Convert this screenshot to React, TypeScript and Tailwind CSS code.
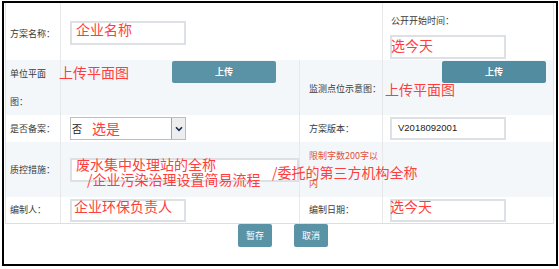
import React from "react";

const lbl = "text-[9px] leading-[28px] text-[#3a3a3a]";
const inputBox = "border-2 border-[#dde1e5] bg-white";
const red = "absolute text-[14px] leading-[14px] text-[#ff3d3d] whitespace-nowrap";
const btn = "bg-[#5b93a6] text-white text-[9px] font-bold flex items-center justify-center rounded-[2px]";

export default function App() {
  return (
    <div className="relative w-[559px] h-[269px] bg-white overflow-hidden font-['Noto_Sans_CJK_SC','Liberation_Sans',sans-serif]">
      <div className="ml-[2px] mt-[1px] w-[556px] h-[265px] border-2 border-black">
        <div className="ml-[1px] w-[549px] border-l border-r border-[#e2e5e8]">
          {/* Row 1 */}
          <div className="flex h-[57px]">
            <div className="w-[55px] border-r border-[#e6e8ea] flex items-center pl-[4px] pt-[5px]">
              <span className={lbl}>方案名称：</span>
            </div>
            <div className="w-[322px] border-r border-[#e6e8ea] flex items-center pl-[9px] pt-[2px]">
              <div className={`${inputBox} w-[116px] h-[24px]`} />
            </div>
            <div className="flex-1 pl-[7px] pt-[11px] flex flex-col">
              <span className="text-[9px] leading-[13px] text-[#3a3a3a] ml-[1px]">公开开始时间：</span>
              <div className={`${inputBox} w-[116px] h-[24px] mt-[8px]`} />
            </div>
          </div>
          {/* Row 2 */}
          <div className="flex h-[55px] bg-[#f3f7fa]">
            <div className="w-[55px] border-r border-[#e6e8ea] flex items-center pl-[4px]">
              <span className={lbl}>
                单位平面
                <br />
                图：
              </span>
            </div>
            <div className="w-[239px] border-r border-[#e6e8ea] pl-[111px] pt-[1px]">
              <div className={`${btn} w-[104px] h-[22px]`}>上传</div>
            </div>
            <div className="w-[83px] border-r border-[#e6e8ea] flex items-center pl-[9px] pt-[3px]">
              <span className={lbl}>监测点位示意图：</span>
            </div>
            <div className="flex-1 pl-[59px] pt-[1px]">
              <div className={`${btn} w-[104px] h-[22px] bg-[#528ca0]`}>上传</div>
            </div>
          </div>
          {/* Row 3 */}
          <div className="flex h-[27px]">
            <div className="w-[55px] border-r border-[#e6e8ea] flex items-center pl-[4px]">
              <span className={lbl}>是否备案：</span>
            </div>
            <div className="w-[239px] border-r border-[#e6e8ea] flex items-center pl-[9px]">
              <div className="w-[116px] h-[23px] border border-[#b9bec3] bg-white flex items-center">
                <span className="text-[10px] text-[#222] ml-[1px] flex-1">否</span>
                <div className="w-[14px] h-full border-l border-[#9ea4aa] bg-[#eceef0] flex items-center justify-center">
                  <svg width="8" height="6" viewBox="0 0 8 6">
                    <path d="M1 1.2 L4 4.4 L7 1.2" fill="none" stroke="#1b2a4a" strokeWidth="1.6" />
                  </svg>
                </div>
              </div>
            </div>
            <div className="w-[83px] border-r border-[#e6e8ea] flex items-center pl-[9px]">
              <span className={lbl}>方案版本：</span>
            </div>
            <div className="flex-1 flex items-center pl-[7px]">
              <div className={`${inputBox} w-[116px] h-[23px] flex items-center pl-[6px]`}>
                <span className="text-[9.5px] text-[#222] font-['Liberation_Sans',sans-serif]">V2018092001</span>
              </div>
            </div>
          </div>
          {/* Row 4 */}
          <div className="flex h-[55px] bg-[#f3f7fa]">
            <div className="w-[55px] border-r border-[#e6e8ea] flex items-center pl-[4px]">
              <span className={lbl}>质控措施：</span>
            </div>
            <div className="w-[239px] border-r border-[#e6e8ea] flex items-center pl-[9px]">
              <div className={`${inputBox} w-[229px] h-[24px]`} />
            </div>
            <div className="w-[83px] border-r border-[#e6e8ea] flex items-center pl-[9px]">
              <span className="text-[9px] leading-[28px] text-[#e0533c]">
                限制字数200字以
                <br />
                内
              </span>
            </div>
            <div className="flex-1" />
          </div>
          {/* Row 5 */}
          <div className="flex h-[27px] border-b border-[#dcdfe2]">
            <div className="w-[55px] border-r border-[#e6e8ea] flex items-center pl-[4px]">
              <span className={lbl}>编制人：</span>
            </div>
            <div className="w-[239px] border-r border-[#e6e8ea] flex items-center pl-[9px]">
              <div className={`${inputBox} w-[116px] h-[23px]`} />
            </div>
            <div className="w-[83px] border-r border-[#e6e8ea] flex items-center pl-[9px]">
              <span className={lbl}>编制日期：</span>
            </div>
            <div className="flex-1 flex items-center pl-[7px]">
              <div className={`${inputBox} w-[116px] h-[23px]`} />
            </div>
          </div>
        </div>
        <div className="flex justify-center gap-[22px] pl-[6px]">
          <div className={`${btn} w-[34px] h-[23px] font-normal bg-[#5a8fa0]`}>暂存</div>
          <div className={`${btn} w-[34px] h-[23px] font-normal bg-[#5a8fa0]`}>取消</div>
        </div>
      </div>

      {/* red annotations */}
      <span className={red} style={{ left: 76, top: 22 }}>企业名称</span>
      <span className={red} style={{ left: 391, top: 38 }}>选今天</span>
      <span className={red} style={{ left: 59, top: 65 }}>上传平面图</span>
      <span className={red} style={{ left: 385, top: 82 }}>上传平面图</span>
      <span className={red} style={{ left: 92, top: 121 }}>选是</span>
      <span className={red} style={{ left: 76, top: 157 }}>废水集中处理站的全称</span>
      <span className={red} style={{ left: 87, top: 172 }}>/企业污染治理设置简易流程</span>
      <span className={red} style={{ left: 272, top: 165 }}>/委托的第三方机构全称</span>
      <span className={red} style={{ left: 74, top: 199 }}>企业环保负责人</span>
      <span className={red} style={{ left: 390, top: 199 }}>选今天</span>
    </div>
  );
}
